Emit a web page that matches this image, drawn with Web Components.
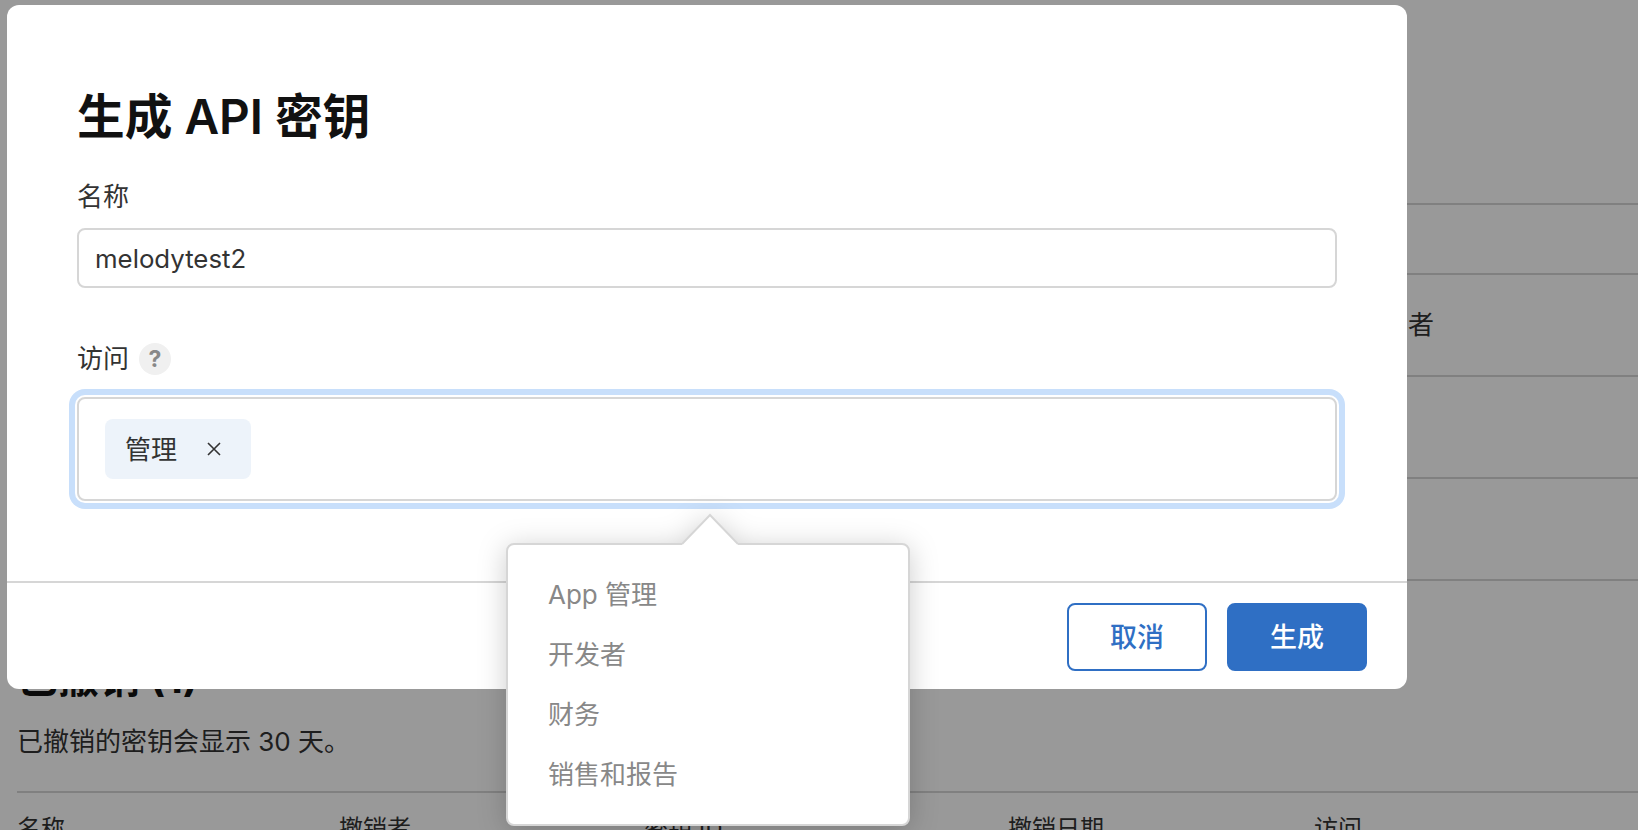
<!DOCTYPE html>
<html lang="zh">
<head>
<meta charset="utf-8">
<title>生成 API 密钥</title>
<style>
  html, body { margin: 0; height: 100%; overflow: hidden; }
  body {
    font-family: Inter, "Noto Sans CJK SC", sans-serif;
    font-size: 26px;
    color: #333;
  }
</style>
</head>
<body>
<keys-page>
  <api-key-dialog heading="生成 API 密钥">
    <form-field label="名称">
      <text-box value="melodytest2"></text-box>
    </form-field>
    <form-field label="访问" help gap="23" style="margin-top:56px">
      <token-box>
        <token-chip>管理</token-chip>
        <role-popover slot="popover">
          <span>App 管理</span>
          <span>开发者</span>
          <span>财务</span>
          <span>销售和报告</span>
        </role-popover>
      </token-box>
    </form-field>
    <action-button slot="actions" kind="outline">取消</action-button>
    <action-button slot="actions" kind="solid">生成</action-button>
  </api-key-dialog>
</keys-page>

<script>
// Page behind the dialog, dimmed by a scrim
class KeysPage extends HTMLElement {
  constructor() {
    super();
    this.attachShadow({ mode: "open" }).innerHTML = `
      <style>
        :host { display: block; position: relative; height: 830px; overflow: hidden; background: #fff; }
        #content { padding: 203px 0 0 17px; }
        .row { border-top: 2px solid #d6d6d6; box-sizing: border-box; display: flex; align-items: center; color: #333; }
        .who { margin-left: 1391px; padding-bottom: 6px; }
        h2 { margin: 72px 0 0; font-size: 41px; line-height: 50px; font-weight: 700; color: #111; }
        p { margin: 21px 0 0; line-height: 36px; color: #333; }
        #head {
          margin-top: 31px; border-top: 2px solid #d6d6d6; padding-top: 20px;
          display: grid; grid-template-columns: 322px 305px 364px 306px 1fr; line-height: 32px;
          font-size: 24px; color: #333;
        }
        #scrim { position: absolute; inset: 0; background: rgba(0,0,0,.4); }
      </style>
      <div id="content">
        <div class="row" style="height:70px"></div>
        <div class="row" style="height:102px"><span class="who">者</span></div>
        <div class="row" style="height:102px"></div>
        <div class="row" style="height:102px"></div>
        <div class="row" style="height:0"></div>
        <h2>已撤销 (1)</h2>
        <p>已撤销的密钥会显示 30 天。</p>
        <div id="head"><span>名称</span><span>撤销者</span><span>密钥 ID</span><span>撤销日期</span><span>访问</span></div>
      </div>
      <div id="scrim"></div>
      <slot></slot>`;
  }
}

class ApiKeyDialog extends HTMLElement {
  constructor() {
    super();
    this.attachShadow({ mode: "open" }).innerHTML = `
      <style>
        :host {
          position: absolute; left: 7px; top: 5px; width: 1400px; height: 684px;
          display: flex; flex-direction: column; box-sizing: border-box;
          background: #fff; border-radius: 12px;
        }
        #main { flex: 1; padding: 84px 70px 0; }
        h1 { margin: 0 0 37px; font-size: 47.7px; line-height: 56px; font-weight: 600; color: #111; }
        #foot {
          border-top: 2px solid #d6d6d6; padding: 20px 40px 18px;
          display: flex; justify-content: flex-end; gap: 20px;
        }
      </style>
      <div id="main"><h1></h1><slot></slot></div>
      <div id="foot"><slot name="actions"></slot></div>`;
    this.shadowRoot.querySelector("h1").textContent = this.getAttribute("heading");
  }
}

class FormField extends HTMLElement {
  constructor() {
    super();
    this.attachShadow({ mode: "open" }).innerHTML = `
      <style>
        :host { display: block; }
        #label { display: flex; align-items: center; gap: 10px; height: 30px; color: #333; }
        #text { padding-bottom: 6px; }
        #help {
          width: 32px; height: 32px; border-radius: 50%; background: #f0f0f0; color: #888;
          display: flex; align-items: center; justify-content: center; font-size: 23px; font-weight: 700;
        }
      </style>
      <div id="label"><span id="text"></span></div>
      <div id="body"><slot></slot></div>`;
    const root = this.shadowRoot;
    root.querySelector("#text").textContent = this.getAttribute("label");
    if (this.hasAttribute("help")) {
      const help = document.createElement("span");
      help.id = "help";
      help.textContent = "?";
      root.querySelector("#label").append(help);
    }
    root.querySelector("#body").style.marginTop = (this.getAttribute("gap") || 16) + "px";
  }
}

class TextBox extends HTMLElement {
  constructor() {
    super();
    this.attachShadow({ mode: "open" }).innerHTML = `
      <style>
        :host {
          display: flex; align-items: center; box-sizing: border-box; height: 60px; padding: 1px 16px 0;
          border: 2px solid #d6d6d6; border-radius: 8px; background: #fff; color: #333; font-size: 25.8px;
        }
      </style>
      <span></span>`;
    this.shadowRoot.querySelector("span").textContent = this.getAttribute("value");
  }
}

class TokenBox extends HTMLElement {
  constructor() {
    super();
    this.attachShadow({ mode: "open" }).innerHTML = `
      <style>
        :host {
          display: flex; align-items: center; position: relative; box-sizing: border-box;
          height: 104px; padding: 0 26px;
          border: 2px solid #d6d6d6; border-radius: 8px; background: #fff;
          box-shadow: 0 0 0 2px #fff, 0 0 0 8px #c8dffb;
        }
      </style>
      <slot></slot>
      <slot name="popover"></slot>`;
  }
}

class TokenChip extends HTMLElement {
  constructor() {
    super();
    this.attachShadow({ mode: "open" }).innerHTML = `
      <style>
        :host {
          display: flex; align-items: center; box-sizing: border-box; width: 146px; height: 60px; padding-left: 20px;
          background: #edf3fa; border-radius: 8px; color: #333;
        }
        #t { padding-bottom: 4px; }
        svg { margin-left: 30px; }
      </style>
      <span id="t"><slot></slot></span>
      <svg width="14" height="14" viewBox="0 0 14 14"><path d="M1 1 13 13M13 1 1 13" stroke="#333" stroke-width="1.6" fill="none"/></svg>`;
  }
}

class RolePopover extends HTMLElement {
  constructor() {
    super();
    this.attachShadow({ mode: "open" }).innerHTML = `
      <style>
        :host {
          position: absolute; left: 427px; top: 144px; width: 404px; height: 283px; z-index: 5;
          box-sizing: border-box;
          filter: drop-shadow(0 4px 14px rgba(0,0,0,.2));
        }
        #panel {
          box-sizing: border-box; height: 100%; padding: 17px 40px;
          background: #fff; border: 2px solid #d6d6d6; border-radius: 8px;
          display: flex; flex-direction: column; color: #888;
        }
        ::slotted(span) { display: flex; flex: none; align-items: center; height: 60px; }
        svg { position: absolute; left: 176px; top: -30px; display: block; }
      </style>
      <svg width="56" height="32" viewBox="0 0 56 32"><path d="M0 30 28 1 56 30V32H0Z" fill="#fff"/><path d="M0 31 28 2 56 31" fill="none" stroke="#d6d6d6" stroke-width="2"/></svg>
      <div id="panel"><slot></slot></div>`;
  }
}

class ActionButton extends HTMLElement {
  constructor() {
    super();
    this.attachShadow({ mode: "open" }).innerHTML = `
      <style>
        :host {
          display: flex; align-items: center; justify-content: center; box-sizing: border-box;
          width: 140px; height: 68px; border-radius: 8px; border: 2px solid #2f6fc4;
          font-size: 27px; font-weight: 500;
        }
        :host([kind=outline]) { background: #fff; color: #2f6fc4; }
        :host([kind=solid]) { background: #2f6fc4; color: #fff; }
        #t { padding-bottom: 3px; }
      </style>
      <span id="t"><slot></slot></span>`;
  }
}

customElements.define("keys-page", KeysPage);
customElements.define("api-key-dialog", ApiKeyDialog);
customElements.define("form-field", FormField);
customElements.define("text-box", TextBox);
customElements.define("token-box", TokenBox);
customElements.define("token-chip", TokenChip);
customElements.define("role-popover", RolePopover);
customElements.define("action-button", ActionButton);
</script>
</body>
</html>
